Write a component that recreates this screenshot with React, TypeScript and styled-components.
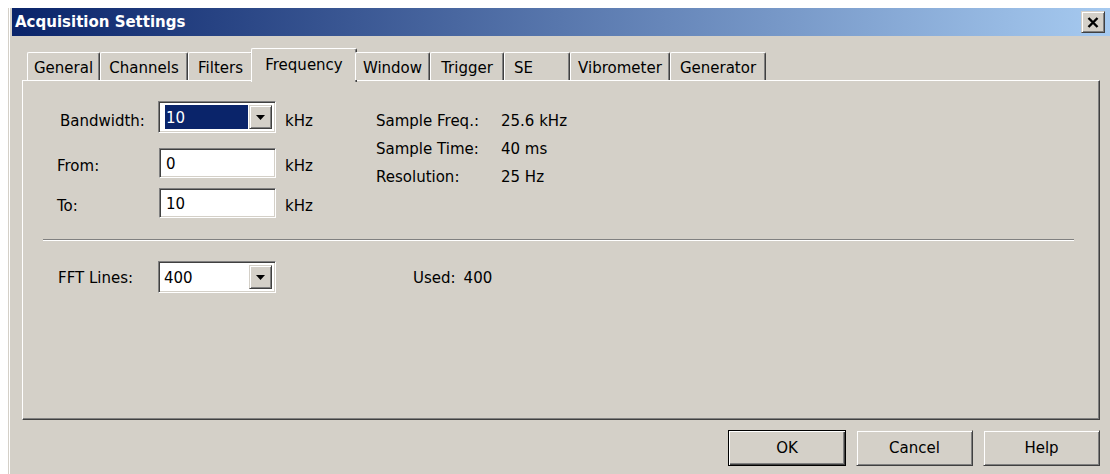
import styled, { createGlobalStyle } from 'styled-components';

const GlobalStyle = createGlobalStyle`
  html, body {
    margin: 0;
    padding: 0;
    background: #ffffff;
  }
  body {
    font-family: "DejaVu Sans", Verdana, sans-serif;
    font-size: 15px;
    color: #000000;
  }
`;

// classic 3D bevels
const raised = `
  border: 1px solid;
  border-color: #d4d0c8 #404040 #404040 #d4d0c8;
  box-shadow: inset 1px 1px #ffffff, inset -1px -1px #808080;
`;

const sunken = `
  border: 1px solid;
  border-color: #808080 #ffffff #ffffff #808080;
  box-shadow: inset 1px 1px #404040, inset -1px -1px #d4d0c8;
`;

const Window = styled.div`
  margin: 8px 0 0 8px;
  width: 1102px;
  height: 466px;
  box-sizing: border-box;
  padding-left: 4px;
  background: #d4d0c8;
  box-shadow: inset 1px 0 #d4d0c8, inset 2px 0 #ffffff;
  display: flex;
  flex-direction: column;
`;

const TitleBar = styled.div`
  height: 28px;
  display: flex;
  align-items: center;
  justify-content: space-between;
  padding: 0 5px 0 3px;
  background: linear-gradient(to right, #0a246a, #a6caf0);
`;

const TitleText = styled.span`
  color: #ffffff;
  font-weight: bold;
  font-size: 15px;
`;

const CloseButton = styled.div`
  ${raised}
  box-sizing: border-box;
  flex: 0 0 24px;
  width: 24px;
  height: 22px;
  background: #d4d0c8;
  display: flex;
  align-items: center;
  justify-content: center;
`;

const Body = styled.div`
  padding: 12px 10px 0 10px;
  display: flex;
  flex-direction: column;
`;

const TabStrip = styled.div`
  height: 32px;
  display: flex;
  align-items: flex-end;
  padding-left: 5px;
  position: relative;
  z-index: 1;
`;

const Tab = styled.div<{ $width: number; $active?: boolean; $left?: boolean }>`
  box-sizing: border-box;
  width: ${(p) => p.$width + (p.$active ? 4 : 0)}px;
  height: ${(p) => (p.$active ? 34 : 28)}px;
  margin: ${(p) => (p.$active ? '0 -2px -2px -2px' : '0')};
  padding: ${(p) => (p.$active ? '0 0 2px 0' : p.$left ? '3px 0 0 9px' : '3px 0 0 0')};
  display: flex;
  align-items: center;
  justify-content: ${(p) => (p.$left ? 'flex-start' : 'center')};
  background: #d4d0c8;
  border-top: 1px solid #ffffff;
  border-left: 1px solid #ffffff;
  border-right: 1px solid #404040;
  border-radius: 2px 2px 0 0;
  box-shadow: inset -1px 0 #808080;
  white-space: nowrap;
`;

const Panel = styled.div`
  height: 340px;
  box-sizing: border-box;
  border: 1px solid;
  border-color: #ffffff #404040 #404040 #ffffff;
  box-shadow: inset -1px -1px #808080;
  padding: 20px 0 0 34px;
  display: flex;
  flex-direction: column;
`;

const Upper = styled.div`
  display: flex;
`;

const FieldColumn = styled.div`
  width: 319px;
  display: flex;
  flex-direction: column;
`;

const FieldRow = styled.div<{ $height: number; $gap?: number }>`
  height: ${(p) => p.$height}px;
  margin-top: ${(p) => p.$gap ?? 0}px;
  display: flex;
  align-items: center;
`;

// labels sit a little below the middle of their control
const Label = styled.span<{ $indent?: number; $drop?: number }>`
  width: 101px;
  box-sizing: border-box;
  padding-left: ${(p) => p.$indent ?? 0}px;
  padding-top: ${(p) => p.$drop ?? 6}px;
`;

const Unit = styled.span<{ $drop?: number }>`
  margin-left: 9px;
  padding-top: ${(p) => p.$drop ?? 6}px;
`;

const Edit = styled.div`
  ${sunken}
  box-sizing: border-box;
  width: 117px;
  height: 30px;
  background: #ffffff;
  display: flex;
  align-items: center;
  padding: 2px 0 0 6px;
  margin-left: 1px;
`;

const Combo = styled.div`
  ${sunken}
  box-sizing: border-box;
  width: 118px;
  height: 32px;
  padding: 3px;
  background: #ffffff;
  display: flex;
  align-items: stretch;
`;

const ComboValue = styled.div<{ $selected?: boolean }>`
  flex: 1;
  display: flex;
  align-items: center;
  padding-top: 2px;
  margin-left: ${(p) => (p.$selected ? 3 : 0)}px;
  margin-right: 1px;
  padding-left: ${(p) => (p.$selected ? 1 : 2)}px;
  background: ${(p) => (p.$selected ? '#0a246a' : 'transparent')};
  color: ${(p) => (p.$selected ? '#ffffff' : '#000000')};
`;

const DropButton = styled.div`
  ${raised}
  box-sizing: border-box;
  width: 23px;
  background: #d4d0c8;
  display: flex;
  align-items: center;
  justify-content: center;
`;

const InfoGrid = styled.div`
  margin-top: 6px;
  display: grid;
  grid-template-columns: 125px auto;
  grid-auto-rows: 28px;
  align-items: center;
`;

const Separator = styled.div`
  width: 1031px;
  margin: 21px 0 0 -14px;
  border-top: 1px solid #808080;
  border-bottom: 1px solid #ffffff;
`;

const UsedText = styled.span`
  margin-left: 137px;
  padding-top: 2px;
  display: flex;
  gap: 8px;
`;

const Footer = styled.div`
  margin-top: 10px;
  display: flex;
  justify-content: flex-end;
  gap: 10px;
`;

const PushButton = styled.button<{ $default?: boolean }>`
  ${raised}
  box-sizing: border-box;
  width: 117px;
  height: 36px;
  padding: 0;
  background: #d4d0c8;
  font: inherit;
  color: #000000;
  ${(p) =>
    p.$default &&
    `
    width: 118px;
    border: 1px solid #000000;
    box-shadow: inset 1px 1px #ffffff, inset -1px -1px #404040, inset -2px -2px #808080;
  `}
`;

const Arrow = () => (
  <svg width="9" height="5" viewBox="0 0 9 5">
    <polygon points="0,0 9,0 4.5,5" fill="#000" />
  </svg>
);

const CloseGlyph = () => (
  <svg width="12" height="11" viewBox="0 0 12 11">
    <path d="M1.5 1 L10.5 10 M10.5 1 L1.5 10" stroke="#000" strokeWidth="2.4" />
  </svg>
);

const TABS = [
  { name: 'General', width: 73 },
  { name: 'Channels', width: 88 },
  { name: 'Filters', width: 65 },
  { name: 'Frequency', width: 102, active: true },
  { name: 'Window', width: 75 },
  { name: 'Trigger', width: 74 },
  { name: 'SE', width: 66, left: true },
  { name: 'Vibrometer', width: 100 },
  { name: 'Generator', width: 96 },
];

const INFO = [
  ['Sample Freq.:', '25.6 kHz'],
  ['Sample Time:', '40 ms'],
  ['Resolution:', '25 Hz'],
];

const App = () => {
  return (
    <>
      <GlobalStyle />
      <Window>
        <TitleBar>
          <TitleText>Acquisition Settings</TitleText>
          <CloseButton>
            <CloseGlyph />
          </CloseButton>
        </TitleBar>
        <Body>
          <TabStrip>
            {TABS.map((t) => (
              <Tab key={t.name} $width={t.width} $active={t.active} $left={t.left}>
                {t.name}
              </Tab>
            ))}
          </TabStrip>
          <Panel>
            <Upper>
              <FieldColumn>
                <FieldRow $height={32}>
                  <Label $indent={3} $drop={8}>Bandwidth:</Label>
                  <Combo>
                    <ComboValue $selected>10</ComboValue>
                    <DropButton>
                      <Arrow />
                    </DropButton>
                  </Combo>
                  <Unit $drop={8}>kHz</Unit>
                </FieldRow>
                <FieldRow $height={30} $gap={15}>
                  <Label>From:</Label>
                  <Edit>0</Edit>
                  <Unit>kHz</Unit>
                </FieldRow>
                <FieldRow $height={30} $gap={10}>
                  <Label>To:</Label>
                  <Edit>10</Edit>
                  <Unit>kHz</Unit>
                </FieldRow>
              </FieldColumn>
              <InfoGrid>
                {INFO.map(([k, v]) => (
                  <>
                    <span key={k}>{k}</span>
                    <span key={v}>{v}</span>
                  </>
                ))}
              </InfoGrid>
            </Upper>
            <Separator />
            <FieldRow $height={32} $gap={20}>
              <Label $indent={1} $drop={2}>FFT Lines:</Label>
              <Combo>
                <ComboValue>400</ComboValue>
                <DropButton>
                  <Arrow />
                </DropButton>
              </Combo>
              <UsedText>
                <span>Used:</span>
                <span>400</span>
              </UsedText>
            </FieldRow>
          </Panel>
          <Footer>
            <PushButton $default>OK</PushButton>
            <PushButton>Cancel</PushButton>
            <PushButton>Help</PushButton>
          </Footer>
        </Body>
      </Window>
    </>
  );
};

export default App;
